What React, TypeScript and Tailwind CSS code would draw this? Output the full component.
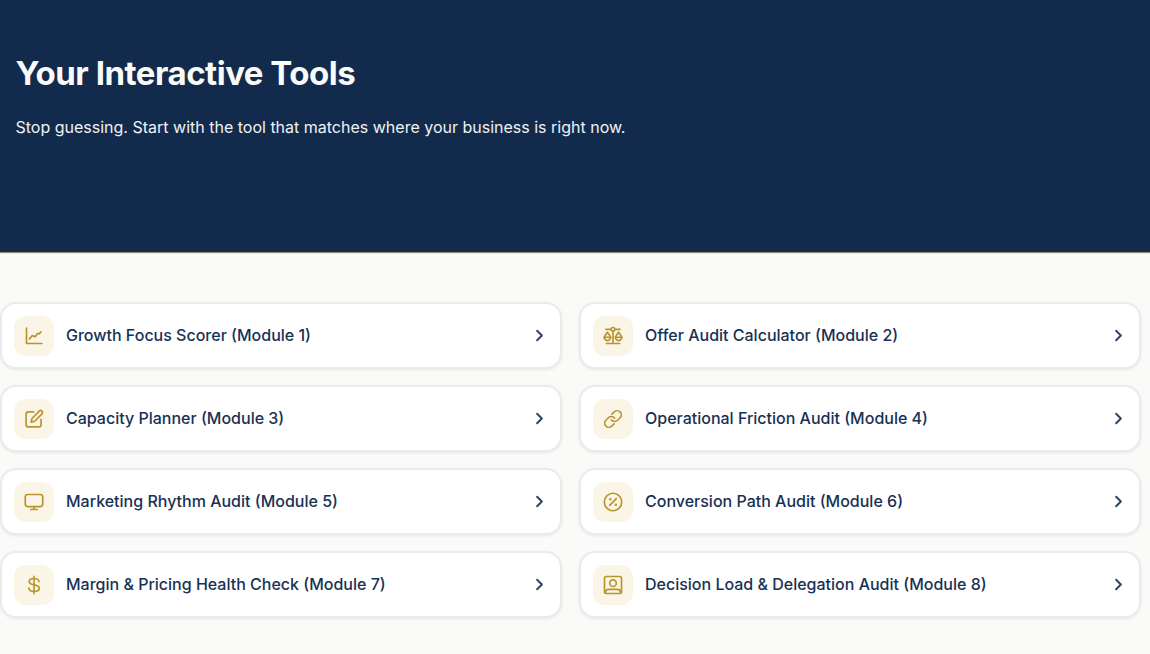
import type { ReactNode } from 'react';
import { ChevronRight } from 'lucide-react';

interface Tool {
  title: string;
  icon: ReactNode;
}

const tools: Tool[] = [
  {
    title: 'Growth Focus Scorer (Module 1)',
    icon: (
      <>
        <path d="M3 2.5v18.5h18.5" />
        <path d="m6.5 15.5 3.5-4 3.5 1.5 2.5-4 2 .5 2.5-2.5" />
      </>
    ),
  },
  {
    title: 'Offer Audit Calculator (Module 2)',
    icon: (
      <>
        <path d="M3.5 4h6.3M14.2 4h6.3M12 6.2V21M4 21h16" />
        <circle cx="12" cy="4" r="2.2" />
        <path d="M5.3 7.5 2.5 11.5a3.600 3.600 0 1 0 5.600 0zM1 13.500h8.500" />
        <path d="m18.700 7.500-2.800 4a3.600 3.600 0 1 0 5.600 0zM14.500 13.500h8.500" />
      </>
    ),
  },
  {
    title: 'Capacity Planner (Module 3)',
    icon: (
      <>
        <path d="M11.5 3.5H5.5a3 3 0 0 0-3 3v12a3 3 0 0 0 3 3h12a3 3 0 0 0 3-3V12.5" />
        <path d="M18.3 2.6a2.300 2.300 0 0 1 3.300 3.300L12.800 14.700 8.500 15.800l1.100-4.400z" />
      </>
    ),
  },
  {
    title: 'Operational Friction Audit (Module 4)',
    icon: (
      <>
        <path d="M10 13a5 5 0 0 0 7.54.54l3-3a5 5 0 0 0-7.07-7.07l-2.7 2.7" />
        <path d="M14 11a5 5 0 0 0-7.54-.54l-3 3a5 5 0 0 0 7.07 7.07l2.7-2.7" />
      </>
    ),
  },
  {
    title: 'Marketing Rhythm Audit (Module 5)',
    icon: (
      <>
        <rect x="1.5" y="3" width="21" height="14.5" rx="3" />
        <path d="M12 17.5V21M8 21h8" />
      </>
    ),
  },
  {
    title: 'Conversion Path Audit (Module 6)',
    icon: (
      <>
        <circle cx="12" cy="12" r="10.5" />
        <path d="m8 16 8-8" />
        <circle cx="8.7" cy="8.7" r="0.6" />
        <circle cx="15.3" cy="15.3" r="0.6" />
      </>
    ),
  },
  {
    title: 'Margin & Pricing Health Check (Module 7)',
    icon: (
      <path d="M12 1.5v21M18 8c-.3-2.3-2.5-3.8-6-3.8-3.5 0-5.8 1.4-5.8 3.8 0 5.2 12.2 2.6 12.2 7.9 0 2.4-2.5 3.9-6.2 3.9-3.7 0-6.2-1.5-6.4-4" />
    ),
  },
  {
    title: 'Decision Load & Delegation Audit (Module 8)',
    icon: (
      <>
        <rect x="1.8" y="1.8" width="20.4" height="20.4" rx="2" />
        <circle cx="12" cy="9.8" r="4" />
        <path d="M3 21c0-2.5 1.500-3.700 4-3.700h10c2.500 0 4 1.200 4 3.700" />
      </>
    ),
  },
];

function ToolCard({ title, icon }: Tool) {
  return (
    <a
      href="#"
      className="flex h-[67px] items-center gap-3 rounded-2xl border-2 border-[#ebebeb] bg-white pr-[11px] pl-3 shadow-[0_1px_3px_rgba(0,0,0,0.08)]"
    >
      <span className="flex size-10 shrink-0 items-center justify-center rounded-xl bg-[#fbf5e7]">
        <svg
          viewBox="0 0 24 24"
          className="size-5 text-[#b8962e]"
          fill="none"
          stroke="currentColor"
          strokeWidth="2"
          strokeLinecap="round"
          strokeLinejoin="round"
          aria-hidden="true"
        >
          {icon}
        </svg>
      </span>
      <span className="flex-1 pb-px text-base font-medium whitespace-nowrap text-[#183154]">{title}</span>
      <ChevronRight className="size-[19px] text-[#2f4567]" strokeWidth={2.5} aria-hidden="true" />
    </a>
  );
}

export default function App() {
  return (
    <div className="min-h-screen bg-[#fafaf8] font-['Inter',sans-serif]">
      <header className="h-[253px] border-b border-[#8f8c78] bg-[#122b4d] px-[15.5px] pt-[53px] shadow-[0_1px_0_#f3edd3]">
        <h1 className="text-[33px] leading-10 font-bold tracking-[-0.48px] whitespace-nowrap text-[#fafaf8]">
          Your Interactive Tools
        </h1>
        <p className="mt-[22px] text-base leading-6 whitespace-nowrap text-[#f0f2f4]">
          Stop guessing. Start with the tool that matches where your business is right now.
        </p>
      </header>
      <main className="grid grid-cols-2 gap-x-[17px] gap-y-4 pt-[49px] pr-[9px]">
        {tools.map((tool) => (
          <ToolCard key={tool.title} {...tool} />
        ))}
      </main>
    </div>
  );
}
